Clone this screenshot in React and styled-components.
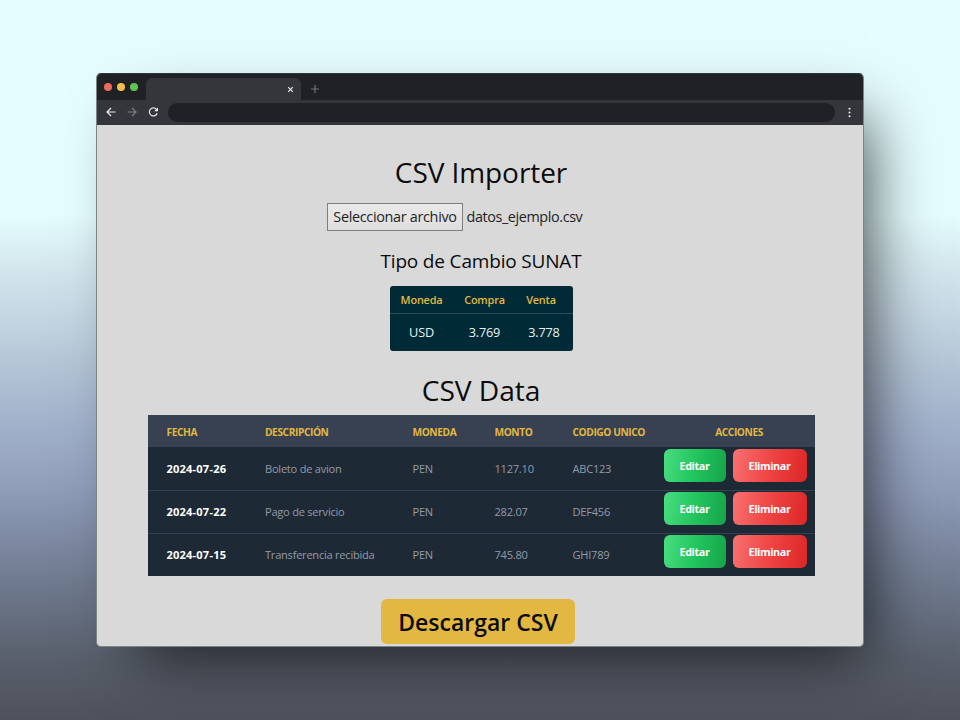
import React from "react";
import styled, { createGlobalStyle } from "styled-components";

const GlobalStyle = createGlobalStyle`
  * { box-sizing: border-box; }
  body { margin: 0; font-family: "Open Sans", "Noto Sans", sans-serif; }
`;

const Backdrop = styled.div`
  width: 960px;
  height: 720px;
  overflow: hidden;
  padding: 73px 96px 0 96px;
  background: linear-gradient(
    180deg,
    #e6fdff 0,
    #e5fdff 215px,
    #d5e9ef 262px,
    #c6d8e4 312px,
    #b2c3d5 370px,
    #a0afca 430px,
    #909dba 490px,
    #78849b 555px,
    #677183 610px,
    #595f6b 660px,
    #4e525d 720px
  );
`;

const Window = styled.div`
  width: 768px;
  height: 574px;
  display: flex;
  flex-direction: column;
  overflow: hidden;
  border: 1px solid #7d8488;
  border-top-color: #2c3537;
  border-radius: 5px;
  background: #d9d9d9;
  box-shadow: 22px 27px 60px -18px rgba(0, 0, 0, 0.72);
`;

const TabStrip = styled.div`
  height: 26px;
  flex: none;
  display: flex;
  align-items: flex-end;
  background: #202124;
`;

const Lights = styled.div`
  display: flex;
  gap: 5px;
  padding: 0 8px 9px 7px;
`;

const Light = styled.span`
  width: 8px;
  height: 8px;
  border-radius: 50%;
  background: ${(p) => p.$color};
`;

const Tab = styled.div`
  width: 155px;
  height: 22px;
  padding-right: 7px;
  display: flex;
  align-items: center;
  justify-content: flex-end;
  border-radius: 6px 6px 0 0;
  background: #35363a;
`;

const NewTab = styled.div`
  height: 22px;
  padding-left: 9px;
  display: flex;
  align-items: center;
`;

const Toolbar = styled.div`
  height: 25px;
  flex: none;
  display: flex;
  align-items: center;
  padding: 0 11px 1px 8px;
  background: #35363a;
`;

const NavIcons = styled.div`
  display: flex;
  gap: 9px;
  margin-right: 9px;
`;

const Address = styled.div`
  flex: 1;
  height: 19px;
  margin-right: 13px;
  border-radius: 10px;
  background: #202124;
`;

const Icon = styled.svg`
  display: block;
  fill: none;
  stroke: ${(p) => p.$color};
  stroke-width: ${(p) => p.$weight || 1.2};
`;

const Page = styled.main`
  flex: 1;
  min-height: 0;
  display: flex;
  flex-direction: column;
  align-items: center;
  padding: 29px 0 0 2px;
  color: #0b0b0b;
`;

const Title = styled.h1`
  margin: 0;
  font-size: 28px;
  line-height: 36px;
  font-weight: 400;
  letter-spacing: -0.08px;
`;

const FilePicker = styled.div`
  align-self: flex-start;
  display: flex;
  align-items: center;
  gap: 3.5px;
  margin: 13px 0 0 228px;
  font-size: 14.4px;
  line-height: 26px;
  letter-spacing: -0.34px;
  color: #1f1f1f;
`;

const FileButton = styled.button`
  width: 136px;
  height: 28px;
  padding: 0 0 1px;
  border: 1px solid #7f7f7f;
  background: linear-gradient(#e9e9e9, #dedede);
  font: inherit;
  line-height: 25px;
  letter-spacing: -0.31px;
  color: inherit;
  white-space: nowrap;
`;

const FileName = styled.span`
  letter-spacing: -0.4px;
`;

const Subtitle = styled.h2`
  margin: 16px 0 0;
  font-size: 19px;
  line-height: 28px;
  font-weight: 400;
  letter-spacing: -0.17px;
`;

const RateTable = styled.div`
  width: 183px;
  height: 65px;
  margin-top: 10.5px;
  border-radius: 3px;
  background: #002b36;
  overflow: hidden;
`;

const RateRow = styled.div`
  display: grid;
  grid-template-columns: 64px 62px 57px;
  align-items: center;
  text-align: center;
  height: ${(p) => (p.$head ? 28 : 36)}px;
  font-size: ${(p) => (p.$head ? 10.9 : 12.7)}px;
  font-weight: ${(p) => (p.$head ? 600 : 400)};
  letter-spacing: -0.2px;
  color: ${(p) => (p.$head ? "#e2b842" : "#e8f1f2")};
  border-bottom: ${(p) => (p.$head ? "1px solid #2b4c55" : "none")};
  padding-top: 1px;
`;

const RateCell = styled.span`
  padding-right: ${(p) => p.$pull || 0}px;
`;

const DataTitle = styled(Title)`
  margin-top: 21px;
  font-size: 28.2px;
`;

const DataTable = styled.div`
  width: 667px;
  margin-top: 7px;
  background: #1e2936;
`;

const DataRow = styled.div`
  display: grid;
  grid-template-columns: 98.5px 147.5px 82px 78px 91px 1fr;
  height: ${(p) => (p.$head ? 32 : 43)}px;
  padding: ${(p) => (p.$head ? "2px 0 0 19px" : "0 0 0 19px")};
  align-items: center;
  background: ${(p) => (p.$head ? "#374151" : "transparent")};
  font-size: ${(p) => (p.$head ? 10.2 : 11.1)}px;
  font-weight: ${(p) => (p.$head ? 700 : 400)};
  letter-spacing: ${(p) => (p.$head ? -0.42 : -0.25)}px;
  color: ${(p) => (p.$head ? "#e2b842" : "#939ba8")};
  & + & + & { box-shadow: inset 0 1px 0 #344050; }
`;

const DateCell = styled.span`
  font-weight: 700;
  letter-spacing: 0.18px;
  color: #fff;
`;

const ActionsHead = styled.span`
  text-align: center;
`;

const Actions = styled.div`
  align-self: start;
  display: flex;
  gap: 7px;
  padding-top: 2px;
`;

const ActionButton = styled.button`
  width: ${(p) => (p.$danger ? 74 : 62)}px;
  height: 33px;
  padding: 0;
  border: 0;
  border-radius: 6px;
  background: ${(p) =>
    p.$danger
      ? "linear-gradient(100deg, #f87171, #ef4444 50%, #dc2626)"
      : "linear-gradient(100deg, #4ade80, #22c55e 50%, #16a34a)"};
  font-family: inherit;
  font-size: 10.8px;
  font-weight: 700;
  letter-spacing: -0.38px;
  color: #fff;
`;

const Download = styled.button`
  width: 194px;
  height: 45px;
  margin: 23px 6px 0 0;
  padding: 2px 0 0;
  border: 0;
  border-radius: 6px;
  background: #e2b842;
  font-family: inherit;
  font-size: 23px;
  font-weight: 600;
  line-height: 43px;
  color: #0b0b0b;
`;

const rows = [
  ["2024-07-26", "Boleto de avion", "PEN", "1127.10", "ABC123"],
  ["2024-07-22", "Pago de servicio", "PEN", "282.07", "DEF456"],
  ["2024-07-15", "Transferencia recibida", "PEN", "745.80", "GHI789"],
];

export default function App() {
  return (
    <>
      <GlobalStyle />
      <Backdrop>
        <Window>
          <TabStrip>
            <Lights>
              <Light $color="#ed6a5e" />
              <Light $color="#f5bf4f" />
              <Light $color="#61c554" />
            </Lights>
            <Tab>
              <Icon width="7" height="7" viewBox="0 0 7 7" $color="#e8eaed">
                <path d="M1.2 1.2l4.6 4.6M5.8 1.2L1.2 5.8" />
              </Icon>
            </Tab>
            <NewTab>
              <Icon width="10" height="10" viewBox="0 0 10 10" $color="#6f7276">
                <path d="M5 1v8M1 5h8" />
              </Icon>
            </NewTab>
          </TabStrip>
          <Toolbar>
            <NavIcons>
              <Icon width="12" height="12" viewBox="0 0 12 12" $color="#e8eaed">
                <path d="M10.5 6H2M6 2L2 6l4 4" />
              </Icon>
              <Icon width="12" height="12" viewBox="0 0 12 12" $color="#7c7e82">
                <path d="M1.5 6H10M6 2l4 4-4 4" />
              </Icon>
              <Icon width="12" height="12" viewBox="0 0 12 12" $color="#e8eaed">
                <path d="M10.2 7.2A4 4 0 1 1 9.5 3.4l.8.9" />
                <path d="M11 1.4v3.8H7.2z" fill="#e8eaed" stroke="none" />
              </Icon>
            </NavIcons>
            <Address />
            <Icon width="4" height="11" viewBox="0 0 4 11" $color="none">
              <g fill="#e8eaed">
                <circle cx="1.5" cy="1.8" r="1.05" />
                <circle cx="1.5" cy="5.5" r="1.05" />
                <circle cx="1.5" cy="9.2" r="1.05" />
              </g>
            </Icon>
          </Toolbar>
          <Page>
            <Title>CSV Importer</Title>
            <FilePicker>
              <FileButton>Seleccionar archivo</FileButton>
              <FileName>datos_ejemplo.csv</FileName>
            </FilePicker>
            <Subtitle>Tipo de Cambio SUNAT</Subtitle>
            <RateTable>
              <RateRow $head>
                <RateCell>Moneda</RateCell>
                <RateCell>Compra</RateCell>
                <RateCell $pull={6}>Venta</RateCell>
              </RateRow>
              <RateRow>
                <RateCell>USD</RateCell>
                <RateCell>3.769</RateCell>
                <RateCell>3.778</RateCell>
              </RateRow>
            </RateTable>
            <DataTitle as="h2">CSV Data</DataTitle>
            <DataTable>
              <DataRow $head>
                <span>FECHA</span>
                <span>DESCRIPCIÓN</span>
                <span>MONEDA</span>
                <span>MONTO</span>
                <span>CODIGO UNICO</span>
                <ActionsHead>ACCIONES</ActionsHead>
              </DataRow>
              {rows.map(([date, ...cells]) => (
                <DataRow key={date}>
                  <DateCell>{date}</DateCell>
                  {cells.map((cell) => (
                    <span key={cell}>{cell}</span>
                  ))}
                  <Actions>
                    <ActionButton>Editar</ActionButton>
                    <ActionButton $danger>Eliminar</ActionButton>
                  </Actions>
                </DataRow>
              ))}
            </DataTable>
            <Download>Descargar CSV</Download>
          </Page>
        </Window>
      </Backdrop>
    </>
  );
}
